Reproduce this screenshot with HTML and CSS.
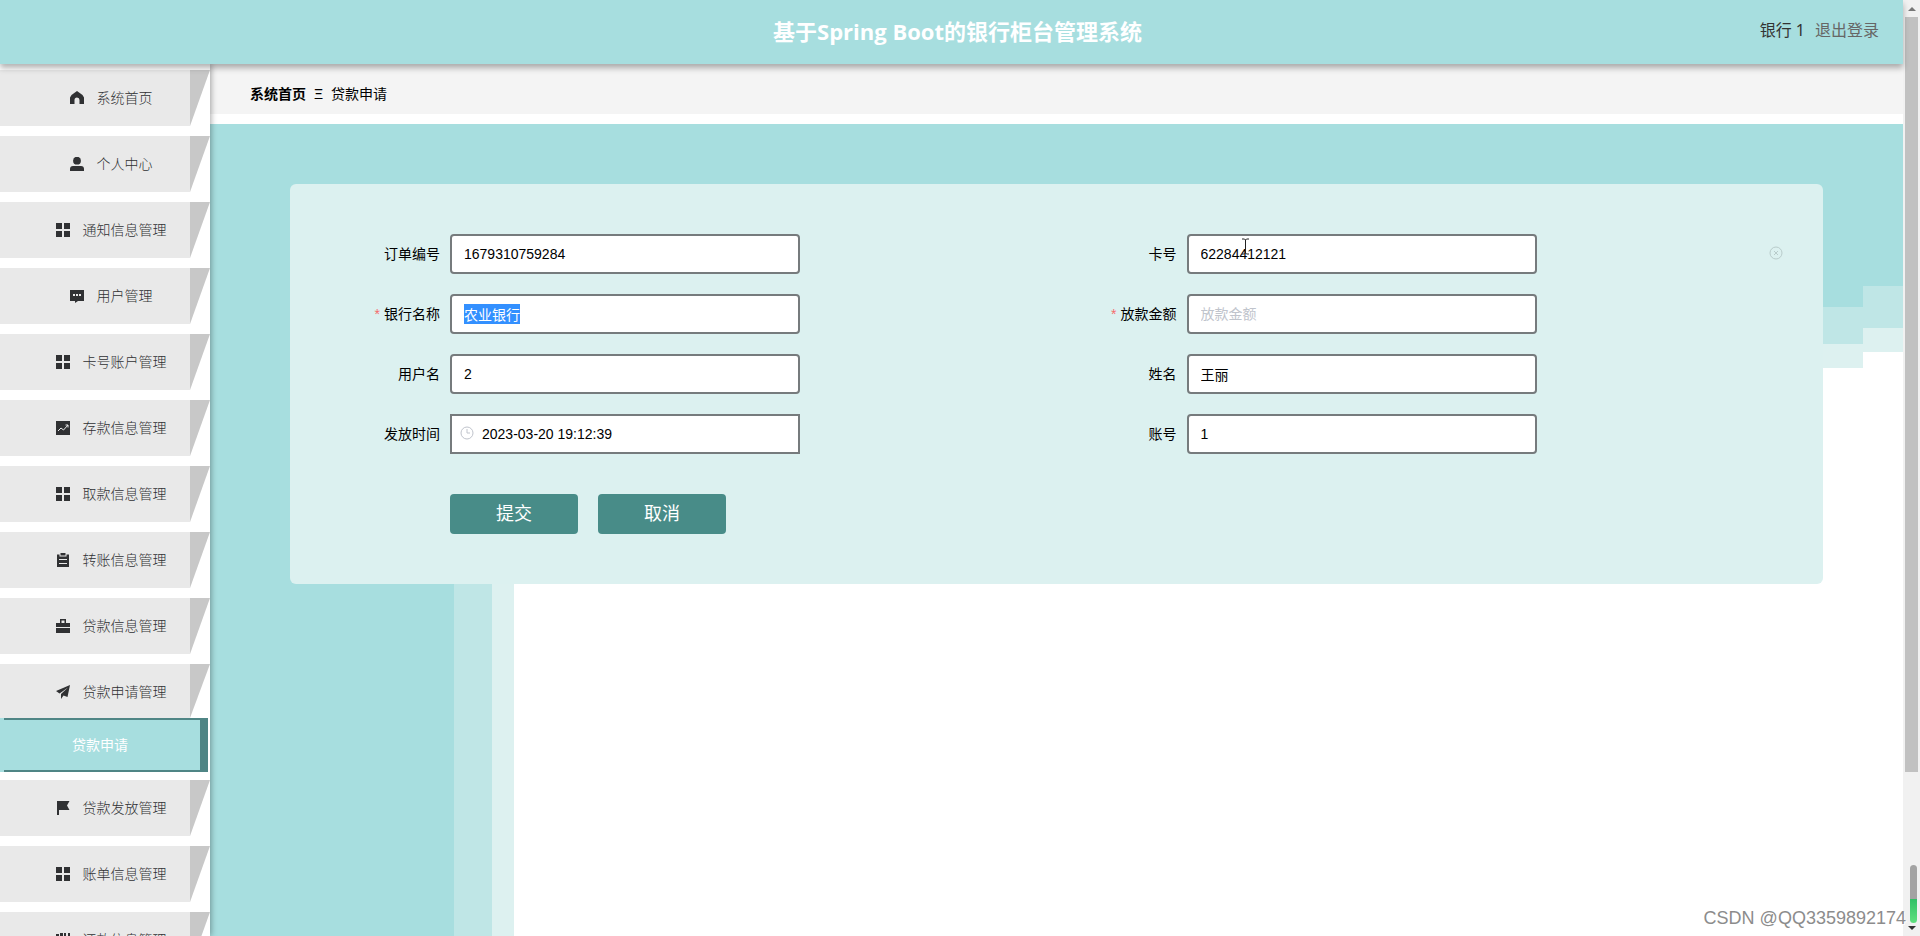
FILE: index.html
```html
<!DOCTYPE html>
<html lang="zh-CN">
<head>
<meta charset="utf-8">
<title>基于Spring Boot的银行柜台管理系统</title>
<link rel="stylesheet" href="styles.css">
</head>
<body>
<svg class="sprite" aria-hidden="true">
  <symbol id="i-home" viewBox="0 0 14 14"><path d="M7 0 12.500 4 14 6.500V13H9.500V9a2.500 2.500 0 0 0-5 0v4H0V6.500L1.500 4z"/></symbol>
  <symbol id="i-user" viewBox="0 0 14 14"><circle cx="7" cy="3.700" r="3.900"/><path d="M0 14v-2q0-3 3-3h8q3 0 3 3v2z"/></symbol>
  <symbol id="i-grid" viewBox="0 0 14 14"><path d="M0 0h6v6H0zM8 0h6v6H8zM0 8h6v6H0zM8 8h6v6H8z"/></symbol>
  <symbol id="i-chat" viewBox="0 0 14 14"><path fill-rule="evenodd" d="M0 1h14v11H8l-3 2v-2H0zM3 5v2h2V5zm3 0v2h2V5zm3 0v2h2V5z"/></symbol>
  <symbol id="i-chart" viewBox="0 0 14 14"><path d="M0 0h14v14H0z"/><path class="line" d="m2 10 3-3 2.500 2L12 4M9.500 4H12v2.500"/></symbol>
  <symbol id="i-clip" viewBox="0 0 14 14"><path fill-rule="evenodd" d="M1 1.500h2.500v2h7v-2H13V14H1zM3 6v1h8V6zm0 4v1h8v-1zM4.500 0h5v2.500h-5z"/></symbol>
  <symbol id="i-case" viewBox="0 0 14 14"><path fill-rule="evenodd" d="M4 4V0h6v4h4v4H0V4zm1.500-2.500V4h3V1.500zM0 9h14v5H0z"/></symbol>
  <symbol id="i-send" viewBox="0 0 14 14"><path d="M14 0 0 6l3.500 2.500L12 2.500 5 9v5l2.500-3.500L11.500 12z"/></symbol>
  <symbol id="i-flag" viewBox="0 0 14 14"><path d="M1 0h12.500L11 4.500 13.500 9H3v5H1z"/></symbol>
  <symbol id="i-books" viewBox="0 0 14 14"><path d="M0 1h3v13H0zM4 0h3v14H4zM8 0h2v11H8zM12 0h2v14h-2z"/></symbol>
</svg>

<div class="app">
  <header class="top">
    <h1 class="title">基于Spring Boot的银行柜台管理系统</h1>
    <div class="account"><span>银行 1</span><a class="logout" href="#">退出登录</a></div>
  </header>
  <div class="body">
    <nav class="side">
      <a class="item" href="#"><svg class="icon"><use href="#i-home"/></svg>系统首页</a>
      <a class="item" href="#"><svg class="icon"><use href="#i-user"/></svg>个人中心</a>
      <a class="item" href="#"><svg class="icon"><use href="#i-grid"/></svg>通知信息管理</a>
      <a class="item" href="#"><svg class="icon"><use href="#i-chat"/></svg>用户管理</a>
      <a class="item" href="#"><svg class="icon"><use href="#i-grid"/></svg>卡号账户管理</a>
      <a class="item" href="#"><svg class="icon"><use href="#i-chart"/></svg>存款信息管理</a>
      <a class="item" href="#"><svg class="icon"><use href="#i-grid"/></svg>取款信息管理</a>
      <a class="item" href="#"><svg class="icon"><use href="#i-clip"/></svg>转账信息管理</a>
      <a class="item" href="#"><svg class="icon"><use href="#i-case"/></svg>贷款信息管理</a>
      <div class="group">
        <a class="item open" href="#"><svg class="icon"><use href="#i-send"/></svg>贷款申请管理</a>
        <a class="sub" href="#" aria-current="page">贷款申请</a>
      </div>
      <a class="item" href="#"><svg class="icon"><use href="#i-flag"/></svg>贷款发放管理</a>
      <a class="item" href="#"><svg class="icon"><use href="#i-grid"/></svg>账单信息管理</a>
      <a class="item" href="#"><svg class="icon"><use href="#i-books"/></svg>还款信息管理</a>
    </nav>
    <main class="main">
      <div class="crumbs"><a class="crumb-home" href="#">系统首页</a><span>Ξ</span><span>贷款申请</span></div>
      <section class="stage">
        <form class="panel">
          <div class="fields">
            <div class="field"><label for="order">订单编号</label><input class="box" id="order" value="1679310759284"></div>
            <div class="field"><label for="card">卡号</label><input class="box" id="card" value="62284412121">
              <svg class="pointer" viewBox="0 0 9 17"><path d="M1 1h2.500l1 1 1-1H8M4.500 2v13M1 16h2.500l1-1 1 1H8"/></svg>
              <button class="clear" type="button" aria-label="清空"><svg viewBox="0 0 14 14"><circle cx="7" cy="7" r="6"/><path d="m5 5 4 4M9 5 5 9"/></svg></button></div>
            <div class="field"><label class="must" for="bank">银行名称</label><input class="box" id="bank" value="农业银行" autofocus></div>
            <div class="field"><label class="must" for="amount">放款金额</label><input class="box" id="amount" placeholder="放款金额"></div>
            <div class="field"><label for="user">用户名</label><input class="box" id="user" value="2"></div>
            <div class="field"><label for="name">姓名</label><input class="box" id="name" value="王丽"></div>
            <div class="field"><label for="time">发放时间</label><span class="date"><svg class="clock" viewBox="0 0 14 14"><circle cx="7" cy="7" r="6"/><path d="M7 3v4h3"/></svg><input class="box square" id="time" value="2023-03-20 19:12:39"></span></div>
            <div class="field"><label for="account">账号</label><input class="box" id="account" value="1"></div>
          </div>
          <div class="actions"><button class="btn" type="submit">提交</button><button class="btn" type="button">取消</button></div>
        </form>
      </section>
    </main>
  </div>
</div>
<div class="scroll" aria-hidden="true">
  <svg class="arrow up" viewBox="0 0 8 4"><path d="M0 4 4 0l4 4z"/></svg>
  <div class="track"><div class="thumb"></div></div>
  <svg class="arrow down" viewBox="0 0 8 4"><path d="m0 0 4 4 4-4z"/></svg>
  <div class="meter"></div>
</div>
<div class="mark">CSDN @QQ3359892174</div>
<script src="script.js"></script>
</body>
</html>
```

FILE: script.js
```
const bank = document.getElementById('bank');
bank.focus();
bank.select();
```

FILE: styles.css
```css
* { box-sizing: border-box; }
body {
  margin: 0;
  height: 100vh;
  overflow: hidden;
  display: flex;
  position: relative;
  background: #fff;
  color: #000;
  font: 14px/20px "Liberation Sans", "Noto Sans CJK SC", sans-serif;
}
a { color: inherit; text-decoration: none; }
input, button { font: inherit; }
.sprite { position: absolute; width: 0; height: 0; }

.app { flex: 1; min-width: 0; display: flex; flex-direction: column; }
.top {
  position: relative;
  z-index: 2;
  flex: none;
  height: 64px;
  display: flex;
  align-items: center;
  justify-content: center;
  padding: 0 0 2px 12px;
  background: #a7dedf;
  box-shadow: 0 4px 6px rgba(0, 0, 0, .3);
}
.title { margin: 0; color: #fff; font: bold 22px/32px "Open Sans", "Noto Sans CJK SC", sans-serif; }
.account {
  position: absolute;
  right: 24px;
  top: 18px;
  display: flex;
  gap: 10px;
  color: #333;
  font: 16px/24px "Noto Sans", "Noto Sans CJK SC", sans-serif;
}
.logout { color: #666; }

.body { flex: 1; min-height: 0; display: flex; }
.side {
  position: relative;
  z-index: 1;
  flex: none;
  width: 210px;
  padding-top: 6px;
  display: flex;
  flex-direction: column;
  gap: 10px;
  overflow: hidden;
  background: #fff;
  box-shadow: 1px 0 6px rgba(0, 0, 0, .35);
}
.item {
  position: relative;
  flex: none;
  height: 56px;
  width: 100%;
  padding-left: 12px;
  display: flex;
  align-items: center;
  justify-content: center;
  gap: 13px;
  color: #303133;
  font-weight: 300;
  background: linear-gradient(#e9e9e9, #e9e9e9) left / 190px 100% no-repeat;
}
.item::after {
  content: "";
  position: absolute;
  right: 0;
  top: 0;
  width: 20px;
  height: 100%;
  background: #c8c8c8;
  clip-path: polygon(0 0, 100% 0, 0 100%);
}
.icon { width: 14px; height: 14px; fill: #303133; }
.line { fill: none; stroke: #e9e9e9; stroke-width: 1; }
.group { flex: none; display: flex; flex-direction: column; margin-bottom: -2px; }
.open { height: 54px; padding-top: 2px; }
.sub {
  height: 54px;
  width: 208px;
  display: flex;
  align-items: center;
  justify-content: center;
  padding-right: 8px;
  color: #fff;
  background:
    linear-gradient(#4f8585, #4f8585) right / 8px 100% no-repeat,
    linear-gradient(#4f8585, #4f8585) right top / 204px 2px no-repeat,
    linear-gradient(#4f8585, #4f8585) right bottom / 204px 2px no-repeat,
    #a7dedf;
}

.main { flex: 1; min-width: 0; display: flex; flex-direction: column; }
.crumbs {
  flex: none;
  height: 50px;
  margin-bottom: 10px;
  padding: 10px 40px 0;
  display: flex;
  align-items: center;
  gap: 8px;
  background: #f4f4f4;
}
.crumb-home { font-weight: bold; }
.stage {
  flex: 1;
  padding: 60px 80px;
  background:
    linear-gradient(#a7dedf 162px, #bfe6e6 162px 204px, #ddf1f0 204px) right top / 40px 228px no-repeat,
    linear-gradient(#a7dedf 183px, #bfe6e6 183px 220px, #ddf1f0 220px) right 40px top / 40px 244px no-repeat,
    linear-gradient(#fff, #fff) right top / 80px 100% no-repeat,
    linear-gradient(#a7dedf, #a7dedf) left top / 100% 183px no-repeat,
    linear-gradient(90deg, #a7dedf 244px, #bfe6e6 244px 282px, #ddf1f0 282px 304px, #fff 304px);
}
.panel { padding: 50px 30px; border-radius: 6px; background: #dcf1f0; }
.fields { display: grid; grid-template-columns: 1fr 1fr; row-gap: 20px; }
.field { position: relative; display: flex; align-items: center; height: 40px; }
.field label { width: 130px; padding-right: 10px; text-align: right; }
.must::before { content: "*"; margin-right: 4px; color: #f56c6c; }
.box {
  width: 350px;
  height: 40px;
  padding: 0 12px;
  border: 2px solid #767b7d;
  border-radius: 4px;
  background: #fff;
  color: #000;
  outline: 0;
}
.box::placeholder { color: #c0c4cc; }
.box::selection { color: #fff; background: #3390ff; }
.date { position: relative; display: flex; }
.square { padding-left: 30px; border-radius: 0; }
.clock { position: absolute; left: 10px; top: 12px; width: 14px; fill: none; stroke: #c0c4cc; }
.pointer { position: absolute; left: 184px; top: 4px; width: 9px; fill: none; stroke: #222; }
.clear { position: absolute; right: 10px; top: 12px; width: 14px; height: 14px; padding: 0; border: 0; background: none; }
.clear svg { display: block; fill: none; stroke: #b9cccb; }
.actions { display: flex; gap: 20px; padding: 40px 0 0 130px; }
.btn {
  width: 128px;
  height: 40px;
  border: 0;
  border-radius: 4px;
  background: #488c88;
  color: #fff;
  font-size: 18px;
}

.scroll {
  position: relative;
  flex: none;
  width: 17px;
  padding: 7px 2px 6px;
  display: flex;
  flex-direction: column;
  align-items: center;
  gap: 6px;
  background: #f1f1f1;
}
.arrow { width: 8px; height: 4px; fill: #777; }
.down { fill: #333; }
.track { flex: 1; width: 100%; }
.thumb { height: calc(100% - 148px); background: #c1c1c1; }
.meter {
  position: absolute;
  right: 3px;
  bottom: 13px;
  width: 7px;
  height: 58px;
  border-radius: 4px;
  background: linear-gradient(#a3a3a3 34px, #2fc065 34px, #5fe07f);
}
.mark {
  position: absolute;
  right: 14px;
  bottom: 8px;
  color: #8c8c8c;
  font-size: 18px;
  line-height: 20px;
  text-shadow: 1px 1px 0 #fff;
}
```
